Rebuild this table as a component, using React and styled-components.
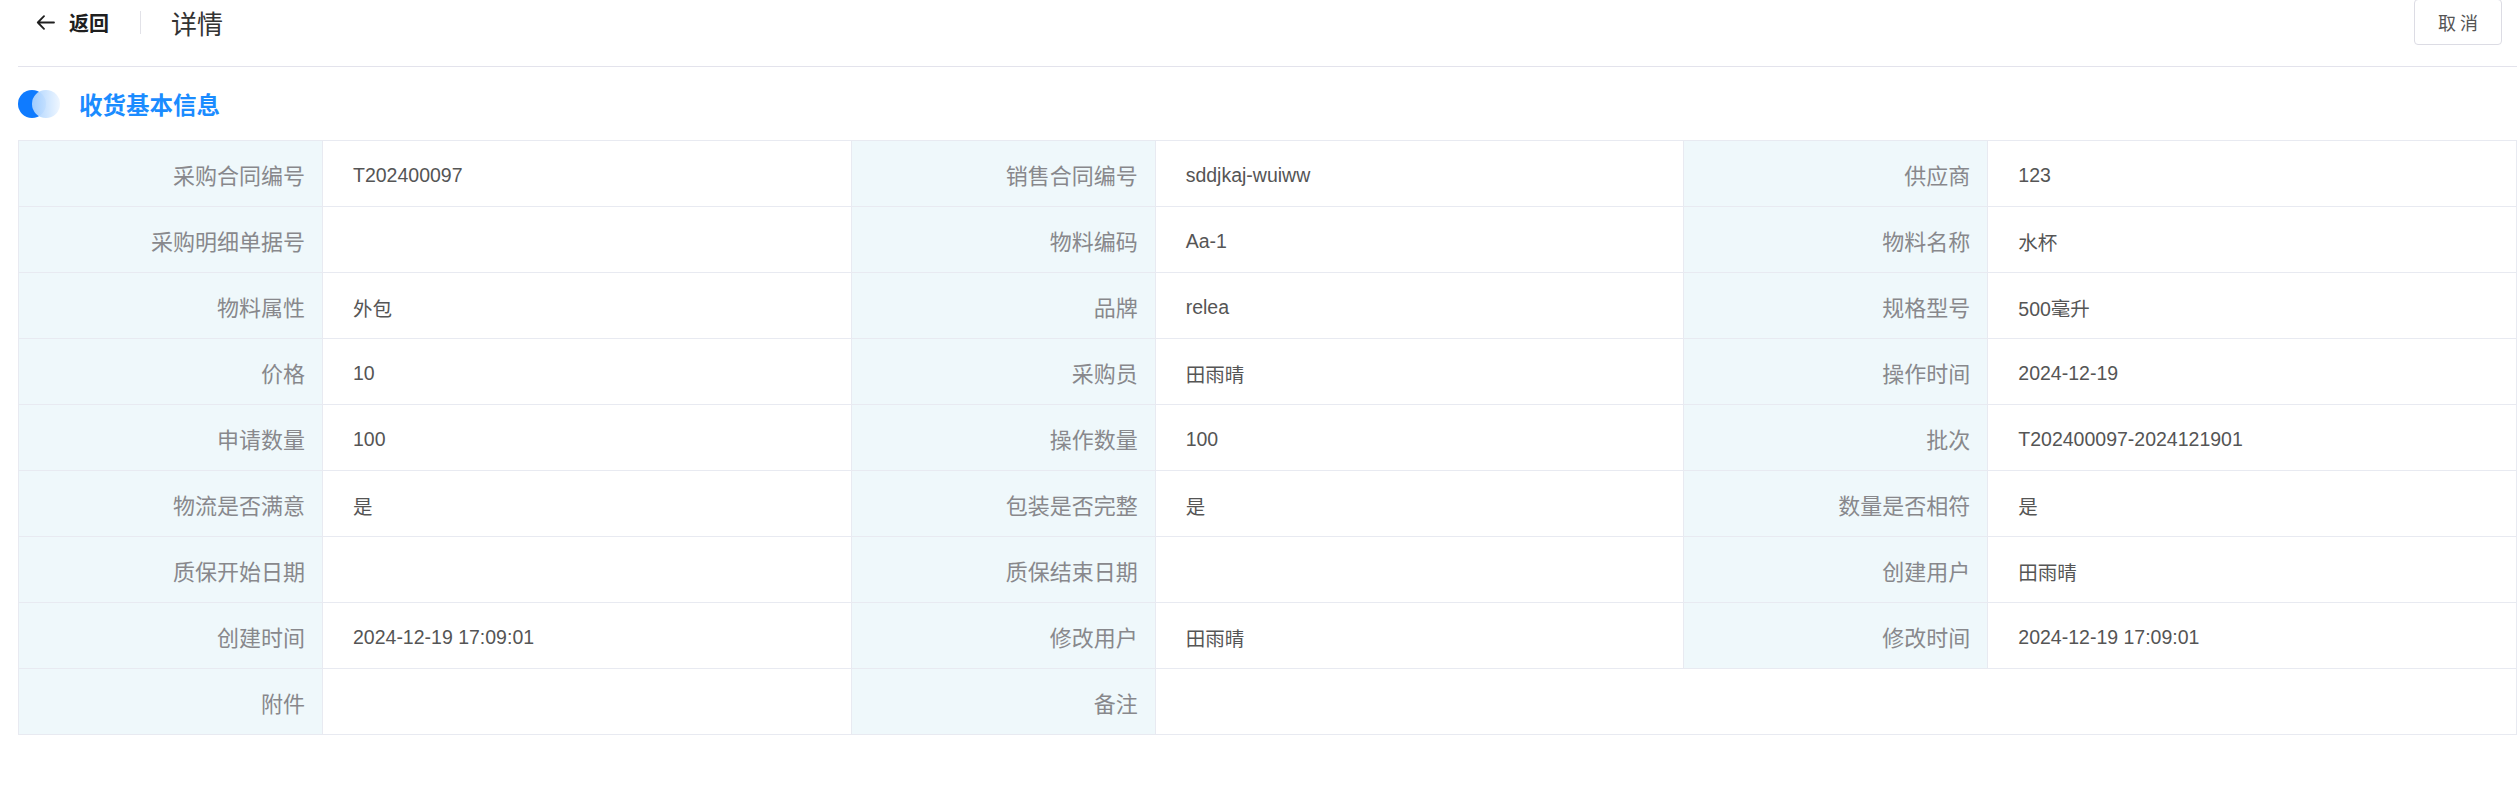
import React from 'react'
import styled, { createGlobalStyle } from 'styled-components'

const GlobalStyle = createGlobalStyle`
  html, body {
    margin: 0;
    padding: 0;
    background: #fff;
  }
  body {
    font-family: "Liberation Sans", "Noto Sans CJK SC", sans-serif;
  }
`

const rows = [
  [['采购合同编号', 'T202400097'], ['销售合同编号', 'sddjkaj-wuiww'], ['供应商', '123']],
  [['采购明细单据号', ''], ['物料编码', 'Aa-1'], ['物料名称', '水杯']],
  [['物料属性', '外包'], ['品牌', 'relea'], ['规格型号', '500毫升']],
  [['价格', '10'], ['采购员', '田雨晴'], ['操作时间', '2024-12-19']],
  [['申请数量', '100'], ['操作数量', '100'], ['批次', 'T202400097-2024121901']],
  [['物流是否满意', '是'], ['包装是否完整', '是'], ['数量是否相符', '是']],
  [['质保开始日期', ''], ['质保结束日期', ''], ['创建用户', '田雨晴']],
  [['创建时间', '2024-12-19 17:09:01'], ['修改用户', '田雨晴'], ['修改时间', '2024-12-19 17:09:01']],
]

const BackArrow = () => (
  <svg width="19" height="15" viewBox="0 0 19 15" fill="none">
    <path d="M18 7.5H1.8M8 1.2L1.8 7.5 8 13.8" stroke="#1f1f1f" strokeWidth="1.8" strokeLinecap="round" strokeLinejoin="round" />
  </svg>
)

const ToggleMark = () => (
  <svg width="42" height="28" viewBox="0 0 42 28">
    <defs>
      <linearGradient id="tg" x1="0" y1="0" x2="1" y2="0">
        <stop offset="0" stopColor="#a6d0ff" />
        <stop offset="1" stopColor="#eef6ff" />
      </linearGradient>
    </defs>
    <circle cx="14" cy="14" r="14" fill="#0f7bff" />
    <circle cx="28" cy="14" r="14" fill="url(#tg)" opacity="0.96" />
  </svg>
)

const App = () => {
  return (
    <Page>
      <GlobalStyle />
      <Header>
        <Back>
          <BackArrow />
          <span>返回</span>
        </Back>
        <Divider />
        <PageTitle>详情</PageTitle>
        <CancelButton>取 消</CancelButton>
      </Header>

      <SectionTitle>
        <ToggleMark />
        <span>收货基本信息</span>
      </SectionTitle>

      <Details>
        {rows.map((row) =>
          row.map(([label, value]) => (
            <React.Fragment key={label}>
              <Label>{label}</Label>
              <Value>{value}</Value>
            </React.Fragment>
          ))
        )}
        <Label>附件</Label>
        <Value></Value>
        <Label>备注</Label>
        <Value $span={3}></Value>
      </Details>
    </Page>
  )
}

const Page = styled.div`
  padding: 0 1px 0 18px;
  color: #333;
`

const Header = styled.div`
  display: flex;
  align-items: center;
  height: 44px;
  padding-bottom: 22px;
  padding-right: 15px;
  border-bottom: 1px solid #e3e3ec;
`

const Back = styled.div`
  display: flex;
  align-items: center;
  gap: 14px;
  margin-left: 18px;
  font-size: 20px;
  font-weight: 600;
  color: #1f1f1f;
  cursor: pointer;
`

const Divider = styled.div`
  width: 1px;
  height: 23px;
  background: #e2e2e8;
  margin: 0 30px 0 31px;
`

const PageTitle = styled.div`
  font-size: 26px;
  color: #333;
`

const CancelButton = styled.button`
  margin-left: auto;
  width: 88px;
  height: 46px;
  border: 1px solid #dcdce4;
  border-radius: 4px;
  background: #fff;
  font-family: "Noto Sans CJK SC", sans-serif;
  font-size: 18px;
  color: #555;
  cursor: pointer;
`

const SectionTitle = styled.div`
  display: flex;
  align-items: center;
  gap: 19px;
  height: 28px;
  margin: 23px 0 22px;
  font-family: "Noto Sans CJK SC", sans-serif;
  font-size: 23.5px;
  font-weight: 600;
  color: #1b8cff;
`

const Details = styled.div`
  display: grid;
  grid-template-columns: repeat(3, 304px 1fr);
  border-top: 1px solid #e8eaf1;
  border-left: 1px solid #e8eaf1;
`

const Cell = styled.div`
  height: 65px;
  display: flex;
  align-items: center;
  border-right: 1px solid #e8eaf1;
  border-bottom: 1px solid #e8eaf1;
  box-sizing: border-box;
  height: 66px;
`

const Label = styled(Cell)`
  justify-content: flex-end;
  padding-right: 17px;
  background: #eff8fb;
  font-family: "Noto Sans CJK SC", sans-serif;
  font-size: 22px;
  color: #88888c;
`

const Value = styled(Cell)`
  grid-column: span ${(p) => p.$span || 1};
  padding: 3px 0 0 30px;
  font-size: 19.5px;
  color: #555;
`

export default App
